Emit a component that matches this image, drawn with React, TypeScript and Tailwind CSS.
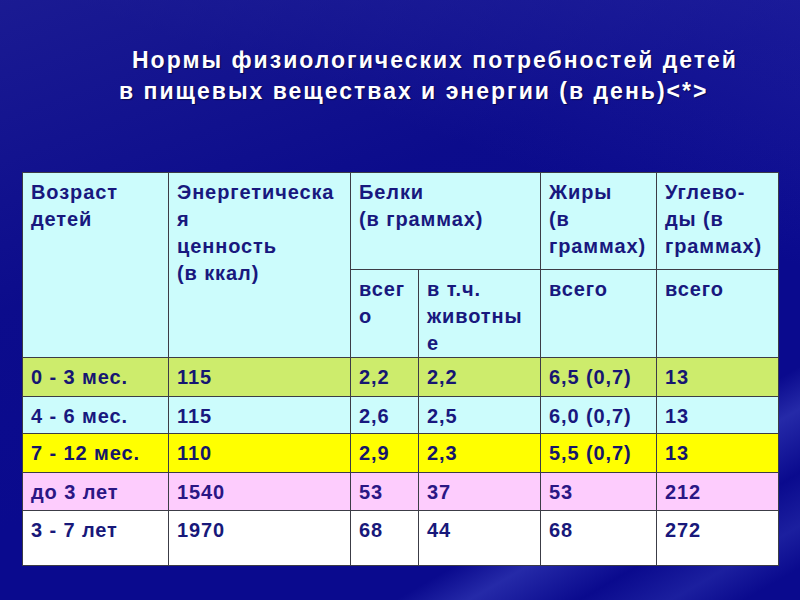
import React from "react";

const font = { fontFamily: '"Liberation Sans", Arial, sans-serif' };

type Row = { cells: string[]; bg: string; text: string };

const rows: Row[] = [
  { cells: ["0 - 3 мес.", "115", "2,2", "2,2", "6,5 (0,7)", "13"], bg: "bg-[#cdec6c]", text: "text-[#161672]" },
  { cells: ["4 - 6 мес.", "115", "2,6", "2,5", "6,0 (0,7)", "13"], bg: "bg-[#ccfcfc]", text: "text-[#18187e]" },
  { cells: ["7 - 12 мес.", "110", "2,9", "2,3", "5,5 (0,7)", "13"], bg: "bg-[#ffff00]", text: "text-[#16166a]" },
  { cells: ["до 3 лет", "1540", "53", "37", "53", "212"], bg: "bg-[#fdccfd]", text: "text-[#2a1684]" },
  { cells: ["3 - 7 лет", "1970", "68", "44", "68", "272"], bg: "bg-white", text: "text-[#18187a]" },
];

const head = "bg-[#ccfcfc] text-[#18187e] pl-[8px] pt-[6px]";

export default function App() {
  return (
    <div
      className="w-[800px] h-[600px] overflow-hidden flex flex-col bg-[#0a0a8e] bg-[linear-gradient(160deg,rgba(40,40,150,0.55)_0%,rgba(20,20,130,0.2)_35%,rgba(0,0,0,0)_60%),linear-gradient(200deg,rgba(60,60,190,0.35)_0%,rgba(0,0,0,0)_30%),linear-gradient(150deg,rgba(0,0,0,0)_78%,rgba(70,80,200,0.45)_82%,rgba(0,0,0,0)_88%,rgba(60,70,190,0.35)_93%,rgba(0,0,0,0)_97%)]"
      style={font}
    >
      <div className="pt-[45px] h-[172px] text-white font-bold text-[23px] leading-[31px] tracking-[2px] [text-shadow:1px_1px_1px_rgba(0,0,40,0.6)]">
        <div className="pl-[132px]">Нормы физиологических потребностей детей</div>
        <div className="pl-[119px]">в пищевых веществах и энергии (в день)&lt;*&gt;</div>
      </div>
      <div className="ml-[22px] w-[757px] grid grid-cols-[145px_181px_67px_121px_115px_121px] grid-rows-[96px_87px_38px_36px_38px_37px_54px] gap-px bg-[#3c3c46] border border-[#3c3c46] font-bold text-[20px] leading-[27px] tracking-[0.9px]">
        <div className={`${head} row-span-2`}>
          Возраст
          <br />
          детей
        </div>
        <div className={`${head} row-span-2`}>
          Энергетическа
          <br />я<br />
          ценность
          <br />
          (в ккал)
        </div>
        <div className={`${head} col-span-2`}>
          Белки
          <br />
          (в граммах)
        </div>
        <div className={head}>
          Жиры
          <br />
          (в
          <br />
          граммах)
        </div>
        <div className={head}>
          Углево-
          <br />
          ды (в
          <br />
          граммах)
        </div>
        <div className={head}>
          всег
          <br />о
        </div>
        <div className={head}>
          в т.ч.
          <br />
          животны
          <br />е
        </div>
        <div className={head}>всего</div>
        <div className={head}>всего</div>
        {rows.map((r, i) =>
          r.cells.map((c, j) => (
            <div key={`${i}-${j}`} className={`${r.bg} ${r.text} pl-[8px] pt-[6px]`}>
              {c}
            </div>
          ))
        )}
      </div>
    </div>
  );
}
